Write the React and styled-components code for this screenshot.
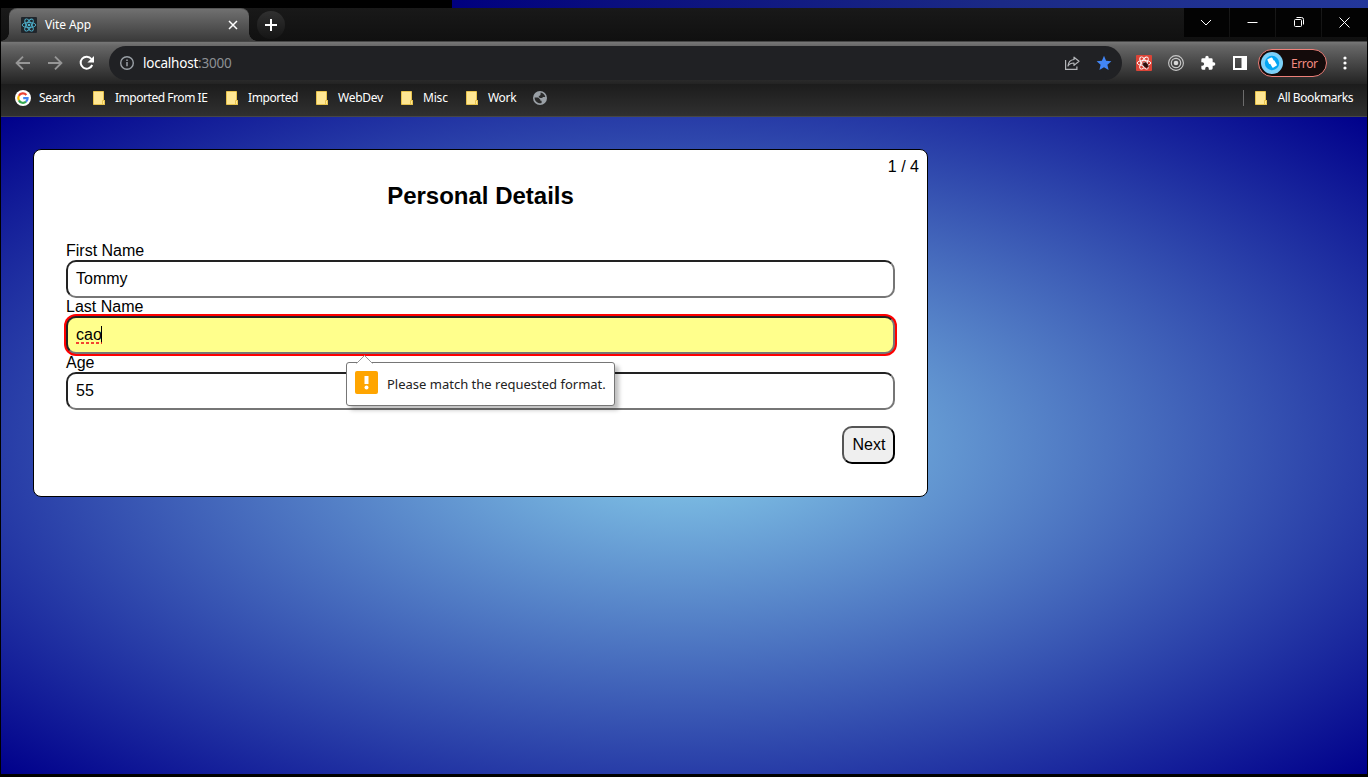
import React from "react";
import styled, { createGlobalStyle } from "styled-components";

const GlobalStyle = createGlobalStyle`
  * { box-sizing: border-box; }
  body { margin: 0; background: #000; overflow: hidden; }
`;

const uiFont = `"Noto Sans", "Open Sans", sans-serif`;

const Desktop = styled.div`
  width: 1368px;
  height: 777px;
  display: flex;
  flex-direction: column;
  padding: 0 1px 3px;
  background: #000;
  font-family: ${uiFont};
`;

const DesktopEdge = styled.div`
  height: 8px;
  margin: 0 -1px 0 451px;
  background: linear-gradient(90deg, #00007f, #0a0f7e 18%, #1b2a86 60%, #23379a);
`;

const TabStrip = styled.header`
  height: 34px;
  display: flex;
  align-items: flex-start;
  padding-left: 8px;
  background: linear-gradient(#191919, #101010);
  border-bottom: 1px solid #464646;
`;

const Tab = styled.div`
  position: relative;
  width: 240px;
  height: 33px;
  display: flex;
  align-items: center;
  padding: 0 11px 0 12px;
  border-radius: 8px 8px 0 0;
  border-top: 1px solid #555;
  background: linear-gradient(#707070, #3a3a3a);
  color: #fff;
  font-size: 12px;

  &::before, &::after {
    content: "";
    position: absolute;
    bottom: 0;
    width: 8px;
    height: 8px;
  }
  &::before { left: -8px; background: radial-gradient(circle at 0 0, transparent 7.5px, #3e3e3e 8px); }
  &::after { right: -8px; background: radial-gradient(circle at 100% 0, transparent 7.5px, #3e3e3e 8px); }
`;

const TabTitle = styled.span`
  flex: 1;
  margin: -1px 0 0 8px;
  letter-spacing: -0.1px;
`;

const NewTab = styled.div`
  display: grid;
  place-items: center;
  width: 28px;
  height: 28px;
  margin: 3px 0 0 8px;
  border-radius: 50%;
  background: linear-gradient(#303030, #151515);
`;

const WindowControls = styled.div`
  display: flex;
  gap: 1px;
  margin-left: auto;
`;

const WindowButton = styled.div`
  width: 45px;
  height: 29px;
  display: grid;
  place-items: center;
  padding-right: 1px;
  background: #030303;
`;

const Toolbar = styled.div`
  height: 42px;
  display: flex;
  align-items: center;
  padding: 0 15px 0 14px;
  background: linear-gradient(#777 0, #666 10%, #4b4b4b 45%, #232323 100%);
`;

const NavButtons = styled.div`
  display: flex;
  gap: 16px;
  margin-right: 14px;
`;

const AddressBar = styled.div`
  width: 1013px;
  height: 34px;
  display: flex;
  align-items: center;
  padding: 0 10px 0 10px;
  border-radius: 17px;
  background: #202124;
  color: #fff;
  font-size: 13.5px;
  svg { flex: none; }
`;

const Url = styled.span`
  flex: 1;
  margin: -1px 0 0 8px;
  letter-spacing: -0.22px;
  span { color: #8d9094; }
`;

const AddressActions = styled.div`
  display: flex;
  gap: 16px;
`;

const Extensions = styled.div`
  display: flex;
  align-items: center;
  gap: 16px;
  margin-left: 14px;
`;

const Profile = styled.div`
  width: 69px;
  height: 28px;
  display: flex;
  align-items: center;
  gap: 8px;
  margin: 0 16px 0 10px;
  padding-left: 2px;
  border: 1px solid #ee8079;
  border-radius: 14px;
  background: #140b0b;
  color: #f28b82;
  font-size: 12px;
  letter-spacing: -0.4px;
`;

const Bookmarks = styled.nav`
  height: 33px;
  display: flex;
  align-items: center;
  padding: 0 14px 5px 14px;
  border-bottom: 1px solid #464646;
  background: linear-gradient(#1c1c1c, #303030);
  color: #fff;
  font-size: 12px;
`;

const Bookmark = styled.div`
  width: ${(p) => p.$width}px;
  display: flex;
  align-items: center;
  gap: 8px;
  letter-spacing: ${(p) => p.$tracking}px;
  white-space: nowrap;
`;

const AllBookmarks = styled.div`
  display: flex;
  align-items: center;
  gap: 8px;
  height: 16px;
  margin-left: auto;
  padding-left: 9px;
  border-left: 1px solid #6c6c6c;
  letter-spacing: -0.4px;
`;

const Page = styled.main`
  flex: 1;
  padding: 32px;
  background: radial-gradient(skyblue, darkblue);
  font: 16px/18px "Liberation Sans", Arial, sans-serif;
  color: #000;
`;

const Card = styled.form`
  position: relative;
  width: 895px;
  height: 348px;
  padding: 32px;
  border: 1px solid #000;
  border-radius: 8px;
  background: #fff;
`;

const Step = styled.div`
  position: absolute;
  top: 8px;
  right: 8px;
`;

const Heading = styled.h2`
  margin: 0 0 32px;
  font-size: 24px;
  line-height: 28px;
  text-align: center;
`;

const Label = styled.label`
  display: block;
  height: 18px;
`;

const Field = styled.div`
  height: 38px;
  display: flex;
  align-items: center;
  padding: 0 8px;
  border: 2px solid;
  border-color: #222 #767676 #767676 #222;
  border-radius: 10px;
  background: ${(p) => (p.$invalid ? "#ffff8c" : "#fff")};
  box-shadow: ${(p) => (p.$invalid ? "0 0 0 2px #f00" : "none")};
`;

const Misspelled = styled.span`
  position: relative;
  &::before {
    content: "";
    position: absolute;
    right: 0;
    top: 0;
    width: 1px;
    height: 17px;
    background: #000;
  }
  &::after {
    content: "";
    position: absolute;
    left: 0;
    right: 0;
    bottom: 0;
    height: 2px;
    background: repeating-linear-gradient(90deg, #f02020 0 3px, transparent 3px 5px);
    opacity: 0.85;
  }
`;

const Actions = styled.div`
  display: flex;
  justify-content: flex-end;
  margin-top: 16px;
`;

const NextButton = styled.button`
  width: 53px;
  height: 38px;
  padding: 0 0 0 1px;
  border: 2px solid;
  border-color: #555 #000 #000 #555;
  border-radius: 10px;
  background: #efefef;
  color: #000;
  font: inherit;
`;

const Tooltip = styled.div`
  position: absolute;
  left: 312px;
  top: 212px;
  width: 269px;
  height: 44px;
  display: flex;
  align-items: center;
  gap: 9px;
  padding: 0 8px 3px;
  border: 1px solid #767676;
  border-radius: 3px;
  background: #fff;
  box-shadow: 4px 4px 4px rgba(0, 0, 0, 0.25);
  font-family: ${uiFont};
  font-size: 13px;
  color: #222;
  white-space: nowrap;
`;

const TooltipArrow = styled.svg`
  position: absolute;
  left: 9px;
  top: -8px;
`;

const Warning = styled.div`
  width: 23px;
  height: 23px;
  display: grid;
  place-items: center;
  border-radius: 2px;
  background: #ffa500;
`;

const TooltipText = styled.span`
  margin-top: 3px;
`;

const Atom = ({ size = 16, color = "#61dafb", bg = "#20232a", dark }) => (
  <svg width={size} height={size} viewBox="0 0 16 16">
    <rect width="16" height="16" rx="1" fill={bg} />
    <g fill="none" stroke={color} strokeWidth="0.9">
      <ellipse cx="8" cy="8" rx="6.8" ry="2.6" />
      <ellipse cx="8" cy="8" rx="6.8" ry="2.6" transform="rotate(60 8 8)" />
      <ellipse cx="8" cy="8" rx="6.8" ry="2.6" transform="rotate(120 8 8)" />
    </g>
    <circle cx="8" cy="8" r="1.3" fill={color} />
    {dark && (
      <g stroke="#2d0d0b" strokeWidth="0.7" fill="#2d0d0b">
        <ellipse cx="9.6" cy="10" rx="1.7" ry="2.7" transform="rotate(-50 9.6 10)" />
        <path d="M7 7.5l1.5 1M6.5 10l2 .3M8 12.5l1-1.5M10 7l.3 2M12.7 8.5 11 9.8M13 12l-2-1M11 13.5l-.5-2" />
      </g>
    )}
  </svg>
);

const Arrow = ({ right }) => (
  <svg width="16" height="16" viewBox="0 0 16 16" fill="none" stroke="#969696" strokeWidth="1.9">
    <path d={right ? "M1 8h13M8 1.6 14.4 8 8 14.4" : "M15 8H2M8 1.6 1.6 8 8 14.4"} />
  </svg>
);

const Reload = () => (
  <svg width="16" height="16" viewBox="0 0 16 16">
    <path d="M13.2 10A6 6 0 1 1 12.4 4" fill="none" stroke="#fff" strokeWidth="2" />
    <path d="M15 1v6.6H8.4z" fill="#fff" />
  </svg>
);

const Info = () => (
  <svg width="16" height="16" viewBox="0 0 16 16" fill="none" stroke="#9aa0a6">
    <circle cx="8" cy="8" r="6.3" strokeWidth="1.4" />
    <path d="M8 7v4.3M8 4.4v1.5" strokeWidth="1.5" />
  </svg>
);

const Share = () => (
  <svg width="16" height="16" viewBox="0 0 16 16" fill="none" stroke="#b4b6b9" strokeWidth="1.2">
    <path d="M1.6 5v9.4h11.3v-3" />
    <path d="M10 2.2 15 6.3 10 10.4V8C7 8 5.2 9 4 11c.3-3.8 2.5-6.1 6-6.5z" strokeLinejoin="round" />
  </svg>
);

const Star = () => (
  <svg width="16" height="16" viewBox="0 0 16 16">
    <path d="M8 .8l2.1 5 5.3.4-4 3.5 1.2 5.3L8 12.2 3.4 15l1.2-5.3-4-3.5 5.3-.4z" fill="#4285f4" />
  </svg>
);

const Target = () => (
  <svg width="16" height="16" viewBox="0 0 16 16" fill="none" stroke="#c8c8c8">
    <circle cx="8" cy="8" r="7.4" strokeWidth="1.1" />
    <circle cx="8" cy="8" r="4.7" strokeWidth="1.2" />
    <circle cx="8" cy="8" r="2.3" fill="#d8d8d8" stroke="none" />
  </svg>
);

const Puzzle = () => (
  <svg width="16" height="16" viewBox="0 0 24 24">
    <path fill="#fff" d="M20.5 11H19V7a2 2 0 0 0-2-2h-4V3.5a2.5 2.5 0 0 0-5 0V5H4a2 2 0 0 0-2 2v3.8h1.5a2.7 2.7 0 0 1 0 5.4H2V20a2 2 0 0 0 2 2h3.8v-1.5a2.7 2.7 0 0 1 5.4 0V22H17a2 2 0 0 0 2-2v-4h1.5a2.5 2.5 0 0 0 0-5z" />
  </svg>
);

const SidePanel = () => (
  <svg width="16" height="16" viewBox="0 0 16 16">
    <path fill="#fff" fillRule="evenodd" d="M1 1h14v14H1zM3 3h6.5v10H3z" />
  </svg>
);

const Avatar = () => (
  <svg width="22" height="22" viewBox="0 0 22 22">
    <circle cx="11" cy="11" r="11" fill="#7cd0f8" />
    <circle cx="11" cy="11" r="7.2" fill="#03a5f3" />
    <g fill="#fff">
      <rect x="7" y="6" width="5.4" height="5.4" rx="1" transform="rotate(-25 9.7 8.7)" />
      <rect x="9.7" y="9" width="5.4" height="6" rx="1" transform="rotate(-30 12.4 12)" />
    </g>
  </svg>
);

const Dots = () => (
  <svg width="4" height="16" viewBox="0 0 4 16" fill="#fff">
    <circle cx="2" cy="3" r="1.6" />
    <circle cx="2" cy="8" r="1.6" />
    <circle cx="2" cy="13" r="1.6" />
  </svg>
);

const Folder = () => (
  <svg width="16" height="16" viewBox="0 0 16 16" fill="#ffe794" stroke="#e8c34d">
    <path d="M2.5 1.5h10v9h1v4h-11z" />
    <path d="M11.5 14.5v-4h2v4z" />
  </svg>
);

const Google = () => (
  <svg width="16" height="16" viewBox="0 0 16 16">
    <circle cx="8" cy="8" r="8" fill="#fff" />
    <g fill="none" strokeWidth="2.2">
      <path d="M11.4 4.9A4.7 4.7 0 0 0 3.9 5.7" stroke="#ea4335" />
      <path d="M3.9 5.7a4.7 4.7 0 0 0 0 4.7" stroke="#fbbc05" />
      <path d="M3.9 10.4a4.7 4.7 0 0 0 7.1 1.3" stroke="#34a853" />
      <path d="M11 11.7c1.1-.9 1.7-2.1 1.6-3.5H8.2" stroke="#4285f4" />
    </g>
  </svg>
);

const Globe = () => (
  <svg width="14" height="14" viewBox="0 0 14 14">
    <circle cx="7" cy="7" r="7" fill="#9aa0a6" />
    <path d="M7.6 1.6c2.3.3 4.2 2 4.7 4.3H10L9.1 7H6.9L5.8 5.9V4.8H7l.6-1.6z" fill="#2b2b2b" />
    <path d="M1.6 6.5h3.6L7.4 8.7v1H8.6v2.4C5 13 1.4 10.300 1.600 6.500z" fill="#2b2b2b" />
  </svg>
);

const Glyph = ({ size = 12, d, width = 1 }) => (
  <svg width={size} height={size} viewBox={`0 0 ${size} ${size}`} fill="none" stroke="#fff" strokeWidth={width}>
    <path d={d} />
  </svg>
);

const folders = [
  { name: "Imported From IE", width: 133, tracking: -0.46 },
  { name: "Imported", width: 90, tracking: -0.42 },
  { name: "WebDev", width: 85, tracking: -0.25 },
  { name: "Misc", width: 65, tracking: -0.2 },
  { name: "Work", width: 69, tracking: -0.3 },
];

export default function App() {
  return (
    <Desktop>
      <GlobalStyle />
      <DesktopEdge />
      <TabStrip>
        <Tab>
          <Atom color="#4fb3cf" bg="#20262c" />
          <TabTitle>Vite App</TabTitle>
          <Glyph size={10} width={1.5} d="M1 1l8 8M9 1 1 9" />
        </Tab>
        <NewTab>
          <Glyph size={12} width={2} d="M6 0v12M0 6h12" />
        </NewTab>
        <WindowControls>
          <WindowButton><Glyph size={12} d="M1 3l5 5 5-5" /></WindowButton>
          <WindowButton><Glyph size={11} d="M.5 5.5h10" /></WindowButton>
          <WindowButton><Glyph size={11} d="M2.500 2.500h5a1 1 0 0 1 1 1v5a1 1 0 0 1-1 1h-5a1 1 0 0 1-1-1v-5a1 1 0 0 1 1-1zM3.500.5h5a2 2 0 0 1 2 2v5" /></WindowButton>
          <WindowButton><Glyph size={11} d="M.5.5l10 10M10.5.5l-10 10" /></WindowButton>
        </WindowControls>
      </TabStrip>
      <Toolbar>
        <NavButtons>
          <Arrow />
          <Arrow right />
          <Reload />
        </NavButtons>
        <AddressBar>
          <Info />
          <Url>localhost<span>:3000</span></Url>
          <AddressActions>
            <Share />
            <Star />
          </AddressActions>
        </AddressBar>
        <Extensions>
          <Atom color="#fff" bg="#dc4437" dark />
          <Target />
          <Puzzle />
          <SidePanel />
        </Extensions>
        <Profile><Avatar /><span>Error</span></Profile>
        <Dots />
      </Toolbar>
      <Bookmarks>
        <Bookmark $width={76} $tracking={-0.35}><Google />Search</Bookmark>
        {folders.map((f) => (
          <Bookmark key={f.name} $width={f.width} $tracking={f.tracking}><Folder />{f.name}</Bookmark>
        ))}
        <Globe />
        <AllBookmarks><Folder />All Bookmarks</AllBookmarks>
      </Bookmarks>
      <Page>
        <Card>
          <Step>1 / 4</Step>
          <Heading>Personal Details</Heading>
          <Label>First Name</Label>
          <Field>Tommy</Field>
          <Label>Last Name</Label>
          <Field $invalid><Misspelled>cao</Misspelled></Field>
          <Label>Age</Label>
          <Field>55</Field>
          <Actions><NextButton type="button">Next</NextButton></Actions>
          <Tooltip role="alert">
            <TooltipArrow width="18" height="9" viewBox="0 0 18 9">
              <path d="M.5 8.5 8.5.5l8 8" fill="#fff" stroke="#999" />
              <path d="M2 8.5h13" stroke="#fff" />
            </TooltipArrow>
            <Warning>
              <svg width="5" height="14" viewBox="0 0 5 14" fill="#fff">
                <rect x=".5" width="4" height="8" />
                <circle cx="2.5" cy="11.5" r="2" />
              </svg>
            </Warning>
            <TooltipText>Please match the requested format.</TooltipText>
          </Tooltip>
        </Card>
      </Page>
    </Desktop>
  );
}
